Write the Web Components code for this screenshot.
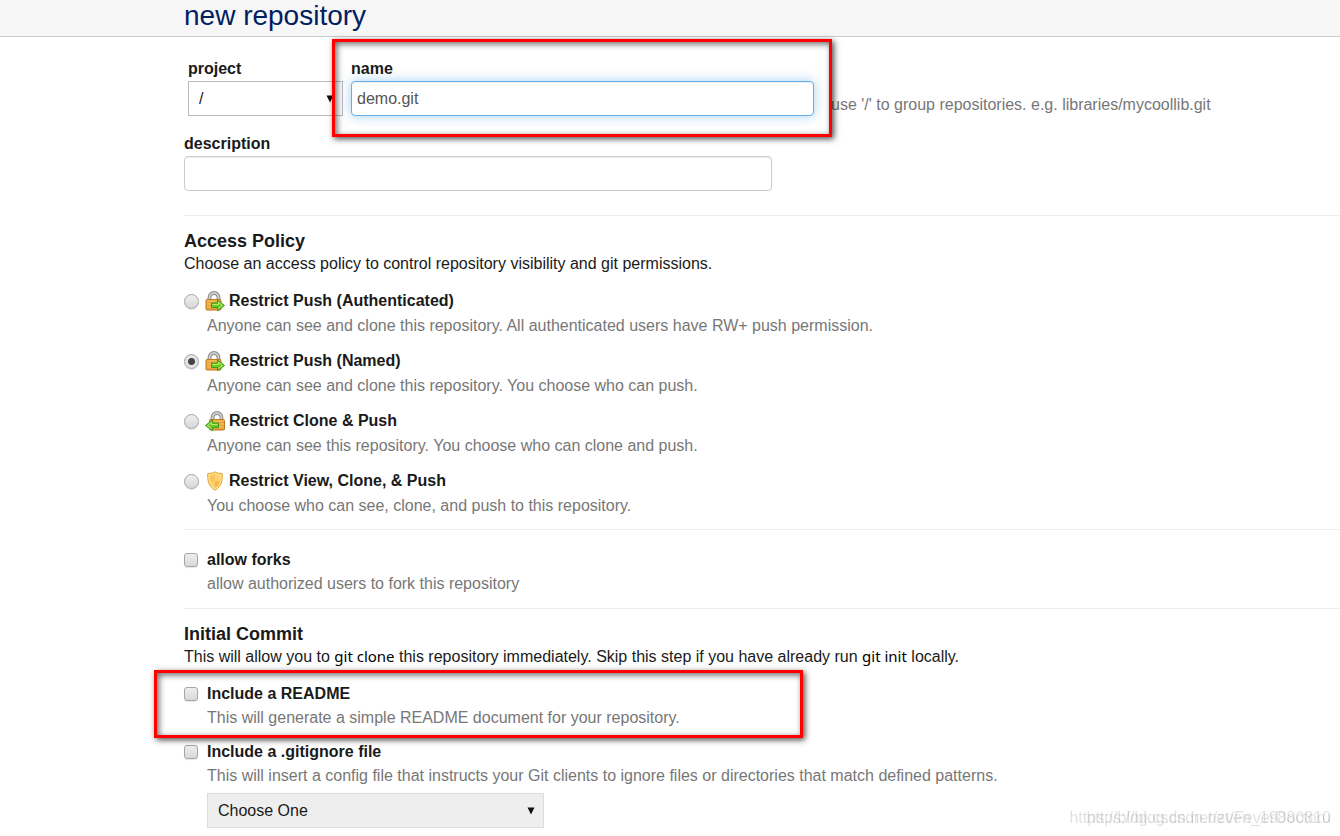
<!DOCTYPE html>
<html lang="en">
<head>
<meta charset="utf-8">
<title>new repository</title>
<style>
    body {
        margin: 0;
        background: #fff;
        color: #1a1a1a;
        font: 16px/20px "Liberation Sans", Arial, sans-serif;
    }
</style>
</head>
<body>
<repo-page></repo-page>

<script>
const ICONS = {
    push: `
        <path d="M4.500 10V6.500a4.500 4.500 0 0 1 9 0V10" fill="none" stroke="#8b8b8b" stroke-width="3.800"/>
        <path d="M4.500 10V6.500a4.500 4.500 0 0 1 9 0V10" fill="none" stroke="#cfcfcf" stroke-width="1.800"/>
        <rect x="1" y="8.500" width="15" height="10.500" rx="1" fill="#e9a13b" stroke="#c07a20"/>
        <path d="M2 10h13M2 13h13M2 16h13" stroke="#fbc765"/>
        <path d="M6.500 12h6V8.800l7 5.700-7 5.200v-3.200h-6z" fill="#6cc724" stroke="#3f9a1c"/>
        <path d="M7.500 13.500h6v-2.300l4 3.300-4 3" fill="none" stroke="#b9ee6c"/>`,
    clone: `
        <path d="M7.500 10V6.500a4.500 4.500 0 0 1 9 0V10" fill="none" stroke="#8b8b8b" stroke-width="3.800"/>
        <path d="M7.500 10V6.500a4.500 4.500 0 0 1 9 0V10" fill="none" stroke="#cfcfcf" stroke-width="1.800"/>
        <rect x="4.500" y="8.500" width="15" height="10.500" rx="1" fill="#e9a13b" stroke="#c07a20"/>
        <path d="M5.500 10h13M5.500 13h13M5.500 16h13" stroke="#fbc765"/>
        <path d="M13.500 12h-6V8.800l-7 5.700 7 5.200v-3.200h6z" fill="#6cc724" stroke="#3f9a1c"/>
        <path d="M12.500 13.500h-6v-2.300l-4 3.300 4 3" fill="none" stroke="#b9ee6c"/>`,
    view: `
        <path d="M10 .800C8.500 2 5.500 2.500 2.800 2.500c-.500 7 .800 13 7.200 16.800 6.400-3.800 7.700-9.800 7.200-16.800C14.500 2.500 11.500 2 10 .800z" fill="#ffdc85" stroke="#e0a63c"/>
        <path d="M10 3C8.500 4 6.500 4.400 4.800 4.500c-.200 5.500 1 9.500 5.200 12.500z" fill="#f7c559"/>
        <path d="M10 3c1.500 1 3.500 1.400 5.200 1.500.200 5.500-1 9.500-5.200 12.500z" fill="#fbd474"/>
        <path d="M10 10H5.300c.500 3 2 5.300 4.700 7z" fill="#fbd06b"/>
        <path d="M10 10h4.700c-.500 3-2 5.300-4.700 7z" fill="#f3b949"/>`
};

class BaseElement extends HTMLElement {
    constructor() {
        super();
        this.attachShadow({ mode: 'open' });
    }

    connectedCallback() {
        this.shadowRoot.innerHTML = this.template();
    }
}

// red frame drawn round whatever is slotted in
class MarkFrame extends BaseElement {
    template() {
        return `
            <style>
                :host {
                    display: block;
                    position: relative;
                }

                :host::after {
                    content: "";
                    position: absolute;
                    z-index: 1;
                    inset: var(--frame-inset, 0);
                    border: 3px solid #f00;
                    box-shadow: 2px 2px 6px rgba(0, 0, 0, .7), inset 2px 2px 6px rgba(0, 0, 0, .6);
                    pointer-events: none;
                }
            </style>
            <slot></slot>`;
    }
}

class TextField extends BaseElement {
    template() {
        return `
            <style>
                :host {
                    display: block;
                }

                label {
                    display: block;
                    height: 22px;
                    font-weight: bold;
                }

                input {
                    display: block;
                    box-sizing: border-box;
                    width: 100%;
                    height: 35px;
                    padding: 0 5px;
                    border: 1px solid #ccc;
                    border-radius: 4px;
                    outline: none;
                    background: #fff;
                    box-shadow: inset 0 1px 1px rgba(0, 0, 0, .075);
                    color: #555;
                    font: inherit;
                }

                :host([active]) input {
                    border-color: #66afe9;
                    box-shadow: inset 0 1px 1px rgba(0, 0, 0, .075), 0 0 12px rgba(102, 175, 233, .6);
                }
            </style>
            <label for="field">${this.getAttribute('label')}</label>
            <input id="field" type="text" value="${this.getAttribute('value') || ''}">`;
    }
}

class SelectField extends BaseElement {
    template() {
        const label = this.getAttribute('label');
        const hint = this.getAttribute('hint') || '';
        return `
            <style>
                :host {
                    display: block;
                }

                label {
                    display: block;
                    height: 22px;
                    font-weight: bold;
                }

                .box {
                    display: grid;
                    align-items: center;
                }

                select, svg {
                    grid-area: 1 / 1;
                }

                select {
                    appearance: none;
                    box-sizing: border-box;
                    width: 100%;
                    height: 35px;
                    padding: 0 10px;
                    border: 1px solid var(--select-border, #bbb);
                    border-radius: 0;
                    background: var(--select-background, #fff);
                    color: inherit;
                    font: inherit;
                }

                svg {
                    justify-self: end;
                    width: 8px;
                    height: 8px;
                    margin-right: 9px;
                    pointer-events: none;
                }
            </style>
            ${label ? `<label for="field">${label}</label>` : ''}
            <div class="box">
                <select id="field" aria-label="${label || hint}">
                    <option>${this.getAttribute('value')}</option>
                </select>
                <svg viewBox="0 0 8 8" aria-hidden="true"><path d="M0.500 0.500h7L4 7.500z" fill="#111"/></svg>
            </div>`;
    }
}

class OptionRow extends BaseElement {
    template() {
        const type = this.getAttribute('type');
        const icon = ICONS[this.getAttribute('icon')];
        return `
            <style>
                :host {
                    display: grid;
                    grid-template-columns: 23px 1fr;
                    align-items: center;
                }

                input {
                    appearance: none;
                    box-sizing: border-box;
                    width: 14px;
                    height: 14px;
                    margin: 0;
                    border: 1px solid #a5a5a5;
                    border-radius: 3px;
                    background: linear-gradient(#eee, #d8d8d8);
                    box-shadow: 0 1px 1px rgba(0, 0, 0, .1);
                }

                input[type=radio] {
                    width: 15px;
                    height: 15px;
                    border-radius: 50%;
                }

                input[type=radio]:checked {
                    background: radial-gradient(circle, #444 0 3px, #e4e4e4 4px);
                }

                label {
                    display: flex;
                    align-items: center;
                    height: 24px;
                    font-weight: bold;
                }

                :host([type=radio]) label {
                    height: 26px;
                }

                svg {
                    width: 20px;
                    height: 20px;
                    margin: 0 4px 0 -2px;
                }

                p {
                    grid-column: 2;
                    margin: 0;
                    line-height: 24px;
                    color: #777;
                }
            </style>
            <input id="option" type="${type}" ${this.hasAttribute('checked') ? 'checked' : ''}>
            <label for="option">${icon ? `<svg viewBox="0 0 20 20" aria-hidden="true">${icon}</svg>` : ''}<slot></slot></label>
            <p><slot name="help"></slot></p>`;
    }
}

class FormSection extends BaseElement {
    template() {
        const heading = this.getAttribute('heading');
        return `
            <style>
                :host {
                    display: block;
                    border-top: 1px solid #eee;
                }

                h2 {
                    margin: 0;
                    padding-top: 13px;
                    font-size: 18px;
                    line-height: 24px;
                }

                p {
                    margin: 0;
                    line-height: 22px;
                }
            </style>
            ${heading ? `<h2>${heading}</h2><p><slot name="intro"></slot></p>` : ''}
            <slot></slot>`;
    }
}

class SiteWatermark extends BaseElement {
    template() {
        return `
            <style>
                :host {
                    position: fixed;
                    right: 9px;
                    bottom: 8px;
                    display: grid;
                    justify-items: end;
                    color: rgba(0, 0, 0, .12);
                    pointer-events: none;
                }

                span {
                    grid-area: 1 / 1;
                }
            </style>
            <span>https://blog.csdn.net/zven_19880810</span>
            <span>https://blog.csdn.net/FeverDoctoru</span>`;
    }
}

class RepoPage extends BaseElement {
    template() {
        return `
            <style>
                :host {
                    display: block;
                }

                header {
                    height: 36px;
                    padding-left: 184px;
                    border-bottom: 1px solid #ccc;
                    background: #f7f7f7;
                }

                h1 {
                    margin: 0;
                    font-size: 28px;
                    font-weight: normal;
                    line-height: 32px;
                    color: #002060;
                }

                main {
                    padding-left: 184px;
                }

                .path {
                    display: flex;
                    gap: 8px;
                    padding: 22px 0 18px 4px;
                }

                .path select-field {
                    width: 155px;
                }

                .path mark-frame {
                    width: 463px;
                    --frame-inset: -20px -18px -21px -19px;
                }

                .path p {
                    align-self: end;
                    margin: 0 0 1px 9px;
                    color: #777;
                }

                .description {
                    width: 588px;
                    margin-bottom: 24px;
                }

                .policies {
                    display: grid;
                    gap: 10px;
                    padding: 13px 0 11px;
                }

                .forks {
                    padding: 18px 0 12px;
                }

                .commit {
                    display: grid;
                    gap: 10px;
                    padding-top: 14px;
                }

                .commit mark-frame {
                    width: 589px;
                    --frame-inset: -12px -30px -8px;
                }

                .ignore select-field {
                    width: 337px;
                    margin: 5px 0 8px 23px;
                    --select-background: #eee;
                    --select-border: #ddd;
                }

                code {
                    font: 15px/20px "Noto Sans", sans-serif;
                    color: #000;
                }
            </style>
            <header><h1>new repository</h1></header>
            <main>
                <div class="path">
                    <select-field label="project" value="/"></select-field>
                    <mark-frame><text-field label="name" value="demo.git" active></text-field></mark-frame>
                    <p>use '/' to group repositories. e.g. libraries/mycoollib.git</p>
                </div>
                <text-field class="description" label="description"></text-field>

                <form-section heading="Access Policy">
                    <span slot="intro">Choose an access policy to control repository visibility and git permissions.</span>
                    <div class="policies">
                        <option-row type="radio" icon="push">Restrict Push (Authenticated)<span slot="help">Anyone can see and clone this repository. All authenticated users have RW+ push permission.</span></option-row>
                        <option-row type="radio" icon="push" checked>Restrict Push (Named)<span slot="help">Anyone can see and clone this repository. You choose who can push.</span></option-row>
                        <option-row type="radio" icon="clone">Restrict Clone &amp; Push<span slot="help">Anyone can see this repository. You choose who can clone and push.</span></option-row>
                        <option-row type="radio" icon="view">Restrict View, Clone, &amp; Push<span slot="help">You choose who can see, clone, and push to this repository.</span></option-row>
                    </div>
                </form-section>

                <form-section>
                    <div class="forks">
                        <option-row type="checkbox">allow forks<span slot="help">allow authorized users to fork this repository</span></option-row>
                    </div>
                </form-section>

                <form-section heading="Initial Commit">
                    <span slot="intro">This will allow you to <code>git clone</code> this repository immediately. Skip this step if you have already run <code>git init</code> locally.</span>
                    <div class="commit">
                        <mark-frame>
                            <option-row type="checkbox">Include a README<span slot="help">This will generate a simple README document for your repository.</span></option-row>
                        </mark-frame>
                        <div class="ignore">
                            <option-row type="checkbox">Include a .gitignore file<span slot="help">This will insert a config file that instructs your Git clients to ignore files or directories that match defined patterns.</span></option-row>
                            <select-field hint=".gitignore template" value="Choose One"></select-field>
                        </div>
                    </div>
                </form-section>
            </main>
            <site-watermark></site-watermark>`;
    }
}

customElements.define('mark-frame', MarkFrame);
customElements.define('text-field', TextField);
customElements.define('select-field', SelectField);
customElements.define('option-row', OptionRow);
customElements.define('form-section', FormSection);
customElements.define('site-watermark', SiteWatermark);
customElements.define('repo-page', RepoPage);
</script>
</body>
</html>
